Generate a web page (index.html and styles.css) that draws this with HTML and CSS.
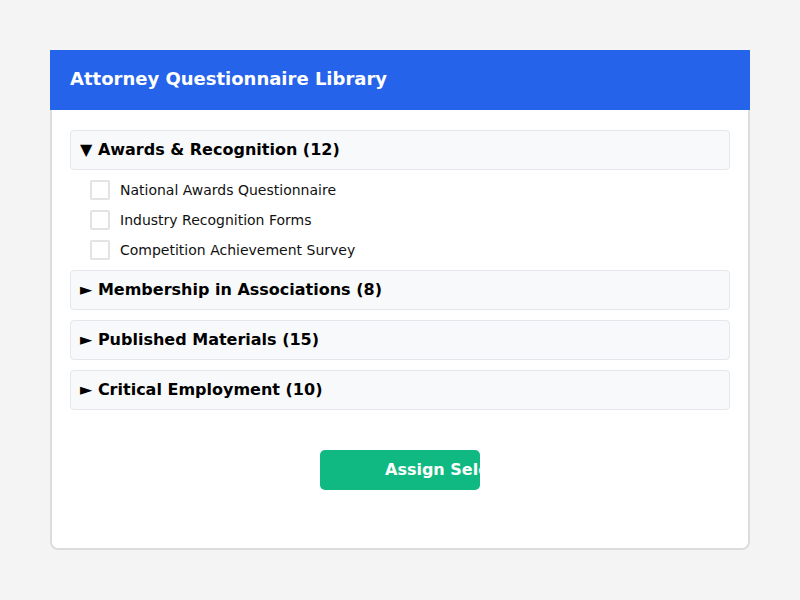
FILE: index.html
```html
<!DOCTYPE html>
<html>
<head>
<meta charset="utf-8">
<link rel="stylesheet" href="styles.css">
</head>
<body>
<div class="card">
  <div class="header">Attorney Questionnaire Library</div>
  <div class="content">
    <div class="section">
      <div class="section-title">▼ Awards &amp; Recognition (12)</div>
      <div class="items">
        <label class="item"><span class="box"></span>National Awards Questionnaire</label>
        <label class="item"><span class="box"></span>Industry Recognition Forms</label>
        <label class="item"><span class="box"></span>Competition Achievement Survey</label>
      </div>
    </div>
    <div class="section">
      <div class="section-title">► Membership in Associations (8)</div>
    </div>
    <div class="section">
      <div class="section-title">► Published Materials (15)</div>
    </div>
    <div class="section">
      <div class="section-title">► Critical Employment (10)</div>
    </div>
    <div class="actions">
      <div class="btn">Assign Selected Questionnaires</div>
    </div>
  </div>
</div>
</body>
</html>
```
FILE: styles.css
```css
html, body {
  margin: 0;
  padding: 0;
}
body {
  background: #f4f4f4;
  font-family: "DejaVu Sans", sans-serif;
  width: 800px;
  height: 600px;
  padding-top: 50px;
  box-sizing: border-box;
}
.card {
  width: 700px;
  height: 500px;
  margin: 0 auto;
  box-sizing: border-box;
  background: #fff;
  border: 2px solid #dcdcdc;
  border-radius: 8px;
}
.header {
  margin: -2px -2px 0;
  height: 60px;
  box-sizing: border-box;
  background: #2563eb;
  color: #fff;
  font-weight: bold;
  font-size: 18px;
  display: flex;
  align-items: center;
  padding: 0 0 4px 20px;
}
.content {
  padding: 20px 18px 0;
  display: flex;
  flex-direction: column;
  gap: 10px;
}
.section-title {
  height: 40px;
  box-sizing: border-box;
  background: #f8f9fa;
  border: 1px solid #e5e7eb;
  border-radius: 4px;
  display: flex;
  align-items: center;
  padding: 0 0 2px 9px;
  font-weight: bold;
  font-size: 16px;
  color: #000;
}
.items {
  display: flex;
  flex-direction: column;
  gap: 10px;
  padding: 10px 0 0 20px;
}
.item {
  display: flex;
  align-items: center;
  height: 20px;
  font-size: 14px;
  color: #111;
}
.box {
  width: 20px;
  height: 20px;
  box-sizing: border-box;
  border: 2px solid #e3e3e3;
  border-radius: 2px;
  margin-right: 10px;
  background: #fff;
}
.actions {
  display: flex;
  justify-content: center;
  padding-top: 30px;
}
.btn {
  width: 160px;
  height: 40px;
  box-sizing: border-box;
  background: #10b981;
  color: #fff;
  border-radius: 5px;
  font-weight: bold;
  font-size: 16px;
  white-space: nowrap;
  overflow: hidden;
  padding-left: 65px;
  line-height: 40px;
}
```
